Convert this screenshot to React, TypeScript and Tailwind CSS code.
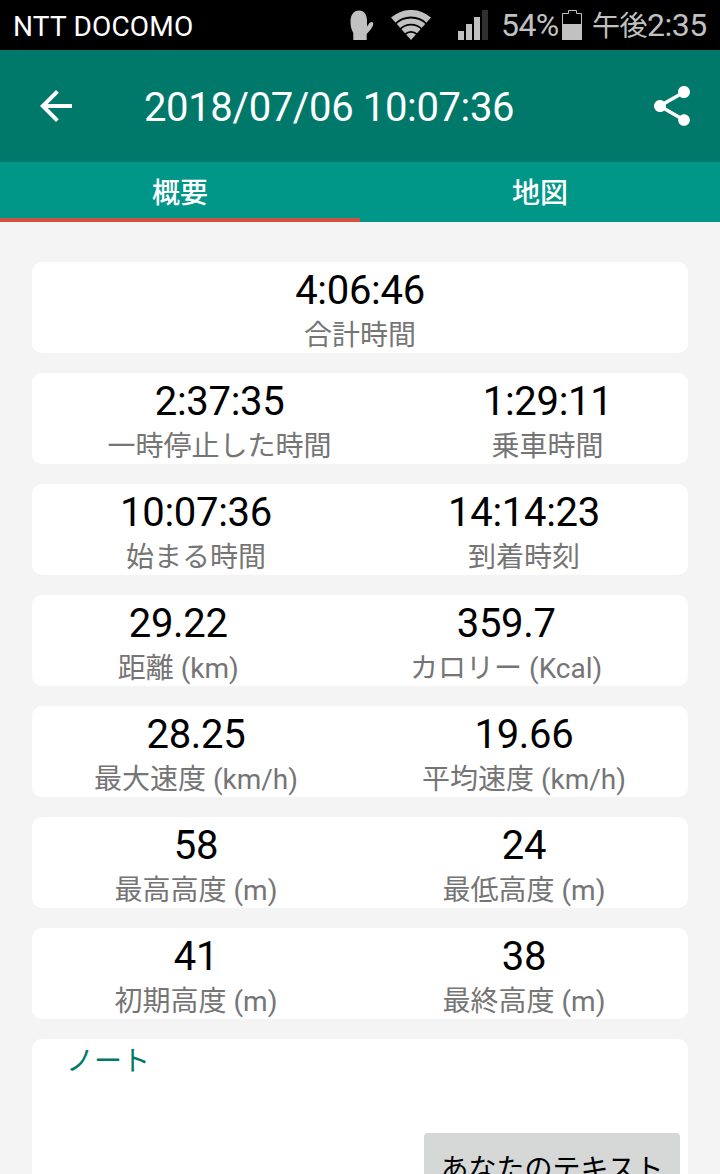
import React, { useState } from "react";

type Stat = {
  value: string;
  label: string;
};

const statRows: Stat[][] = [
  [{ value: "4:06:46", label: "合計時間" }],
  [
    { value: "2:37:35", label: "一時停止した時間" },
    { value: "1:29:11", label: "乗車時間" },
  ],
  [
    { value: "10:07:36", label: "始まる時間" },
    { value: "14:14:23", label: "到着時刻" },
  ],
  [
    { value: "29.22", label: "距離 (km)" },
    { value: "359.7", label: "カロリー (Kcal)" },
  ],
  [
    { value: "28.25", label: "最大速度 (km/h)" },
    { value: "19.66", label: "平均速度 (km/h)" },
  ],
  [
    { value: "58", label: "最高高度 (m)" },
    { value: "24", label: "最低高度 (m)" },
  ],
  [
    { value: "41", label: "初期高度 (m)" },
    { value: "38", label: "最終高度 (m)" },
  ],
];

function StatusBar() {
  return (
    <div className="flex h-[50px] shrink-0 items-center bg-black pl-[13px] pr-[11px] text-[#c1c1c1]">
      <span className="pt-[3px] text-[28px] leading-[50px] tracking-[0.2px] text-white">NTT DOCOMO</span>
      <div className="ml-auto flex items-center">
        <svg className="h-[30px] w-[24px]" viewBox="0 0 24 30" fill="currentColor">
          <path d="M3.300 30 V23 C1.500 20 .5 16 .5 12 C.5 5 3.500 .5 9 .5 C14.500 .5 17 5 17 11 V16.500 L19.500 13 C21 11.200 23.800 12 23.200 14.200 C22.500 18 19 21.500 16.700 24 V30 Z" />
        </svg>
        {/* wifi fan, cut into bands by the black arcs */}
        <svg className="ml-[17px] h-[30px] w-[40px]" viewBox="0 0 40 30">
          <path d="M20 30 L0 7.600 A30 30 0 0 1 40 7.600 Z" fill="currentColor" />
          <g fill="none" stroke="#000" strokeWidth="1.800">
            <circle cx="20" cy="30" r="22.500" />
            <circle cx="20" cy="30" r="15.300" />
            <circle cx="20" cy="30" r="8.200" />
          </g>
        </svg>
        <svg className="ml-[27px] h-[30px] w-[30px]" viewBox="0 0 30 30" fill="currentColor">
          <rect x="0" y="21" width="6" height="9" />
          <rect x="8" y="14" width="6" height="16" />
          <rect x="16" y="7" width="6" height="23" />
          <rect x="24" y="0" width="6" height="30" fill="#303030" />
        </svg>
        <span className="ml-[13px] w-[61px] whitespace-nowrap pt-[1px] text-[32px] leading-[47px] tracking-[-0.6px]">
          54%
        </span>
        <svg className="h-[30px] w-[21px]" viewBox="0 0 21 30" fill="none" stroke="currentColor">
          <path d="M.5 29.500 V3.500 H6.500 V.5 H14.500 V3.500 H19.500 V29.500 Z" />
          <rect x="0" y="14" width="20" height="16" fill="currentColor" stroke="none" />
        </svg>
        <span className="ml-[9px] w-[117px] whitespace-nowrap pt-[1px] text-[32px] leading-[47px] tracking-[-0.5px]">
          <span className="text-[28px]">午後</span>2:35
        </span>
      </div>
    </div>
  );
}

function Header() {
  return (
    <header className="flex h-[112px] shrink-0 items-center bg-[#00796b] px-8 text-white">
      <button className="h-12 w-12">
        <svg className="h-12 w-12" viewBox="0 0 24 24" fill="currentColor">
          <path d="M20 11H7.830l5.590-5.590L12 4l-8 8 8 8 1.410-1.410L7.830 13H20v-2z" />
        </svg>
      </button>
      <h1 className="ml-16 pt-1 text-[40px] leading-[48px] tracking-[-0.36px]">2018/07/06 10:07:36</h1>
      <button className="-mr-2 ml-auto h-12 w-12">
        <svg className="h-12 w-12" viewBox="0 0 24 24" fill="currentColor">
          <path d="M18 16.080c-.76 0-1.440.3-1.960.77L8.910 12.700c.05-.23.09-.46.09-.7s-.04-.47-.09-.7l7.050-4.110c.54.5 1.250.81 2.040.81 1.660 0 3-1.340 3-3s-1.340-3-3-3-3 1.340-3 3c0 .24.04.47.09.7L8.040 9.810C7.500 9.310 6.790 9 6 9c-1.660 0-3 1.340-3 3s1.340 3 3 3c.79 0 1.500-.31 2.040-.81l7.120 4.160c-.05.21-.08.43-.08.65 0 1.610 1.310 2.920 2.920 2.920 1.610 0 2.920-1.310 2.920-2.920s-1.310-2.920-2.920-2.920z" />
        </svg>
      </button>
    </header>
  );
}

function StatCard({ stats }: { stats: Stat[] }) {
  return (
    <div className="flex h-[91px] shrink-0 rounded-[10px] bg-white pt-[5px]">
      {stats.map((stat) => (
        <div key={stat.label} className="flex-auto text-center">
          <p className="text-[40px] leading-[48px] tracking-[-0.3px] text-black">{stat.value}</p>
          <p className="text-[28px] leading-[42px] text-[#757575]">{stat.label}</p>
        </div>
      ))}
    </div>
  );
}

export default function App() {
  const [activeTab, setActiveTab] = useState<"summary" | "map">("summary");

  return (
    <div className="flex h-[1174px] w-[720px] flex-col overflow-hidden bg-[#f4f4f4] font-['Roboto','Noto_Sans_CJK_JP',sans-serif]">
      <StatusBar />
      <Header />
      <nav className="flex h-[60px] shrink-0 bg-[#009688]">
        {(["summary", "map"] as const).map((tab) => (
          <button
            key={tab}
            onClick={() => setActiveTab(tab)}
            className={`flex-1 border-b-4 pt-2 text-[28px] leading-[48px] font-medium text-white ${
              activeTab === tab ? "border-[#cf5142]" : "border-transparent"
            }`}
          >
            {tab === "summary" ? "概要" : "地図"}
          </button>
        ))}
      </nav>
      <main className="flex flex-col gap-5 px-8 pt-10">
        {statRows.map((stats) => (
          <StatCard key={stats[0].label} stats={stats} />
        ))}
        <div className="flex h-[240px] shrink-0 flex-col rounded-[10px] bg-white pr-2">
          <p className="pl-[34px] pt-[2px] text-[28px] leading-[42px] text-[#00796b]">ノート</p>
          <button className="mt-[50px] h-[74px] w-[256px] self-end rounded-[4px] bg-[#d6d7d7] text-[28px] text-black">
            あなたのテキスト
          </button>
        </div>
      </main>
    </div>
  );
}
